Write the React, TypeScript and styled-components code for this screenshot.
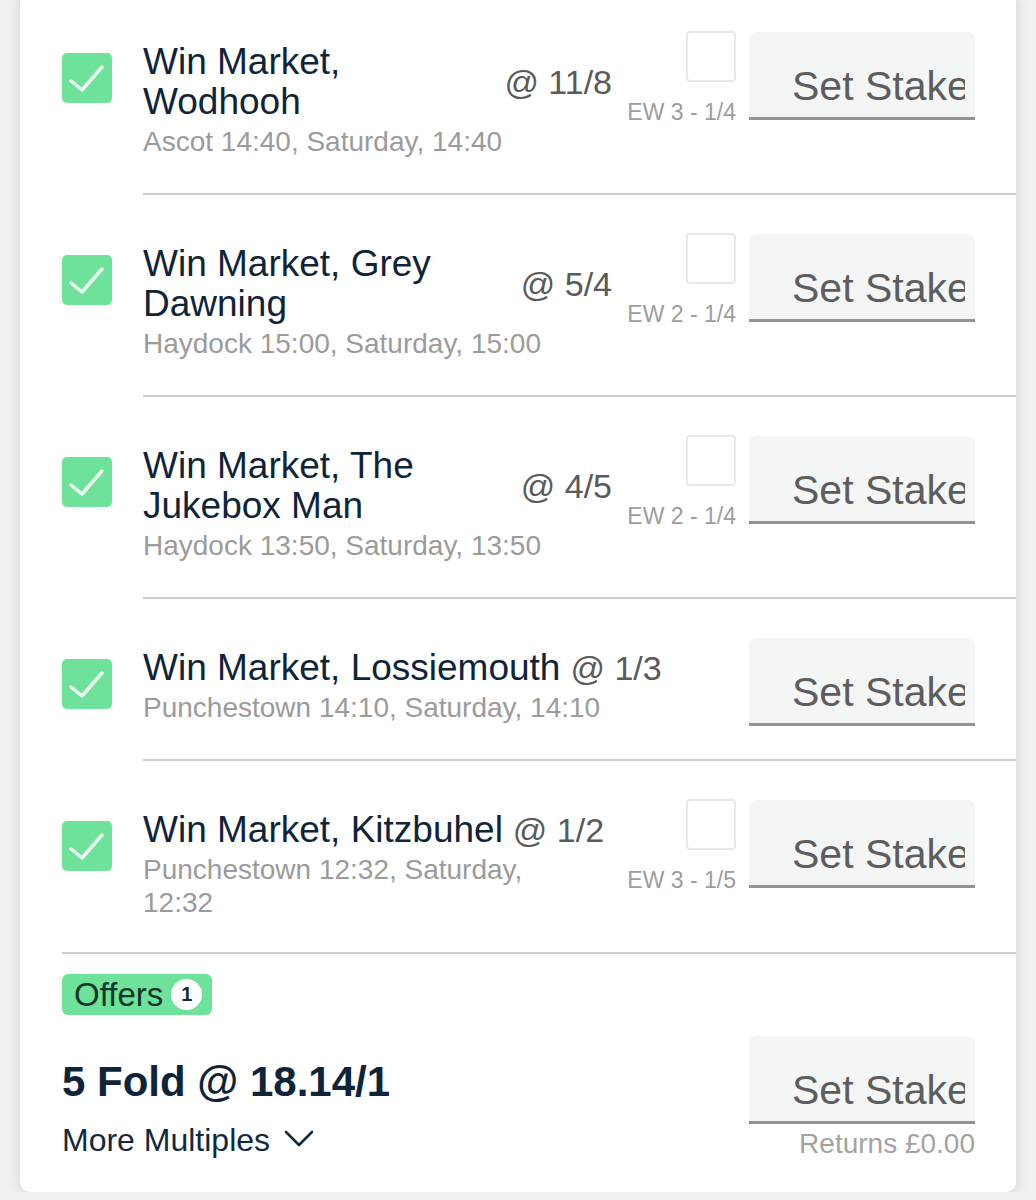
import React from 'react';
import styled, { createGlobalStyle } from 'styled-components';

interface Selection {
  id: number;
  market: string;
  odds: string;
  meeting: string;
  eachWay?: string;
}

const selections: Selection[] = [
  { id: 1, market: 'Win Market, Wodhooh', odds: '11/8', meeting: 'Ascot 14:40, Saturday, 14:40', eachWay: 'EW 3 - 1/4' },
  { id: 2, market: 'Win Market, Grey Dawning', odds: '5/4', meeting: 'Haydock 15:00, Saturday, 15:00', eachWay: 'EW 2 - 1/4' },
  { id: 3, market: 'Win Market, The Jukebox Man', odds: '4/5', meeting: 'Haydock 13:50, Saturday, 13:50', eachWay: 'EW 2 - 1/4' },
  { id: 4, market: 'Win Market, Lossiemouth', odds: '1/3', meeting: 'Punchestown 14:10, Saturday, 14:10' },
  { id: 5, market: 'Win Market, Kitzbuhel', odds: '1/2', meeting: 'Punchestown 12:32, Saturday, 12:32', eachWay: 'EW 3 - 1/5' },
];

const CheckIcon = () => (
  <svg width="50" height="50" viewBox="0 0 50 50">
    <polyline
      points="9,28 20,37 40,14"
      fill="none"
      stroke="#eafff1"
      strokeWidth="3.5"
      strokeLinecap="round"
      strokeLinejoin="round"
    />
  </svg>
);

const ChevronDown = () => (
  <svg width="30" height="17" viewBox="0 0 30 17">
    <polyline
      points="2,2 15,15 28,2"
      fill="none"
      stroke="#112a3d"
      strokeWidth="2.6"
      strokeLinecap="round"
      strokeLinejoin="round"
    />
  </svg>
);

const StakeInput: React.FC = () => (
  <StakeBox>
    <StakeText>Set Stake</StakeText>
  </StakeBox>
);

const App: React.FC = () => {
  return (
    <>
      <GlobalStyle />
      <Card>
        {selections.map((s, i) => (
          <Row key={s.id}>
            <Check>
              <CheckIcon />
            </Check>
            <Main last={i === selections.length - 1}>
              <Body>
                <TitleRow>
                  <Title>{s.market}</Title>
                  <Odds>@ {s.odds}</Odds>
                </TitleRow>
                <Meeting>{s.meeting}</Meeting>
              </Body>
              {s.eachWay && (
                <EachWay>
                  <EachWayBox />
                  <EachWayLabel>{s.eachWay}</EachWayLabel>
                </EachWay>
              )}
              <StakeSlot>
                <StakeInput />
              </StakeSlot>
            </Main>
          </Row>
        ))}
        <Footer>
          <OffersBadge>
            Offers
            <OffersCount>1</OffersCount>
          </OffersBadge>
          <MultipleRow>
            <MultipleInfo>
              <FoldTitle>5 Fold @ 18.14/1</FoldTitle>
              <MoreMultiples>
                More Multiples
                <ChevronDown />
              </MoreMultiples>
            </MultipleInfo>
            <MultipleStake>
              <StakeInput />
              <Returns>Returns £0.00</Returns>
            </MultipleStake>
          </MultipleRow>
        </Footer>
      </Card>
    </>
  );
};

export default App;

const GlobalStyle = createGlobalStyle`
  html, body {
    margin: 0;
    padding: 0;
    background: #f1f1f1;
    font-family: "Liberation Sans", Arial, sans-serif;
    overflow: hidden;
  }
  * {
    box-sizing: border-box;
  }
`;

const Card = styled.div`
  margin: -7px 20px 0;
  padding-left: 42px;
  background: #ffffff;
  border-radius: 0 0 10px 10px;
  box-shadow: 0 2px 14px rgba(0, 0, 0, 0.13);
`;

const Row = styled.div`
  display: flex;
  align-items: flex-start;
`;

const Check = styled.div`
  flex: none;
  width: 50px;
  height: 50px;
  margin-top: 60px;
  margin-right: 31px;
  border-radius: 5px;
  background: #6ee29b;
  svg {
    display: block;
  }
`;

const Main = styled.div<{ last: boolean }>`
  flex: 1;
  min-width: 0;
  display: flex;
  align-items: flex-start;
  gap: 13px;
  padding: 38px 41px ${({ last }) => (last ? '30px' : '32px')} 0;
  border-bottom: ${({ last }) => (last ? 'none' : '2px solid #cdcdcd')};
`;

const Body = styled.div`
  flex: 1;
  min-width: 0;
  margin-top: 11px;
  padding-bottom: 3px;
`;

const TitleRow = styled.div`
  display: flex;
  align-items: center;
  gap: 10px;
`;

const Title = styled.div`
  flex: 0 1 auto;
  min-width: 0;
  font-size: 37px;
  line-height: 40px;
  color: #0f2438;
`;

const Odds = styled.div`
  flex: none;
  white-space: nowrap;
  font-size: 34px;
  line-height: 40px;
  color: #5a5a5a;
`;

const Meeting = styled.div`
  margin-top: 3px;
  padding-right: 40px;
  font-size: 28px;
  line-height: 33px;
  color: #9b9b9b;
`;

const EachWay = styled.div`
  flex: none;
  width: 111px;
  display: flex;
  flex-direction: column;
  align-items: flex-end;
`;

const EachWayBox = styled.div`
  width: 50px;
  height: 51px;
  border: 2px solid #e8e8e8;
  border-radius: 4px;
  background: #ffffff;
`;

const EachWayLabel = styled.div`
  margin-top: 19px;
  font-size: 23px;
  line-height: 23px;
  white-space: nowrap;
  color: #9d9d9d;
`;

const StakeSlot = styled.div`
  flex: none;
  margin-top: 1px;
`;

const StakeBox = styled.div`
  width: 226px;
  height: 88px;
  padding: 34px 10px 0 43px;
  background: #f4f5f5;
  border-radius: 8px 8px 0 0;
  border-bottom: 3px solid #939393;
`;

const StakeText = styled.span`
  display: block;
  overflow: hidden;
  white-space: nowrap;
  font-size: 41px;
  line-height: 41px;
  color: #5d5d5d;
`;

const Footer = styled.div`
  border-top: 2px solid #cdcdcd;
  padding: 20px 41px 32px 0;
`;

const OffersBadge = styled.div`
  display: inline-flex;
  align-items: center;
  gap: 8px;
  height: 41px;
  padding: 0 10px 0 12px;
  border-radius: 6px;
  background: #6ee29b;
  font-size: 33px;
  color: #12352b;
`;

const OffersCount = styled.span`
  display: inline-flex;
  align-items: center;
  justify-content: center;
  width: 31px;
  height: 31px;
  border-radius: 50%;
  background: #ffffff;
  font-size: 20px;
  font-weight: bold;
  color: #112a3d;
`;

const MultipleRow = styled.div`
  display: flex;
  justify-content: space-between;
  align-items: flex-end;
  margin-top: 21px;
`;

const MultipleInfo = styled.div`
  display: flex;
  flex-direction: column;
  gap: 14px;
`;

const FoldTitle = styled.div`
  font-size: 42px;
  line-height: 48px;
  font-weight: bold;
  color: #0f2438;
`;

const MoreMultiples = styled.div`
  display: flex;
  align-items: center;
  gap: 14px;
  font-size: 32px;
  line-height: 40px;
  color: #112a3d;
  svg {
    margin-top: -4px;
  }
`;

const MultipleStake = styled.div`
  display: flex;
  flex-direction: column;
  align-items: flex-end;
`;

const Returns = styled.div`
  margin-top: 4px;
  font-size: 28px;
  line-height: 32px;
  color: #a3a3a3;
`;
